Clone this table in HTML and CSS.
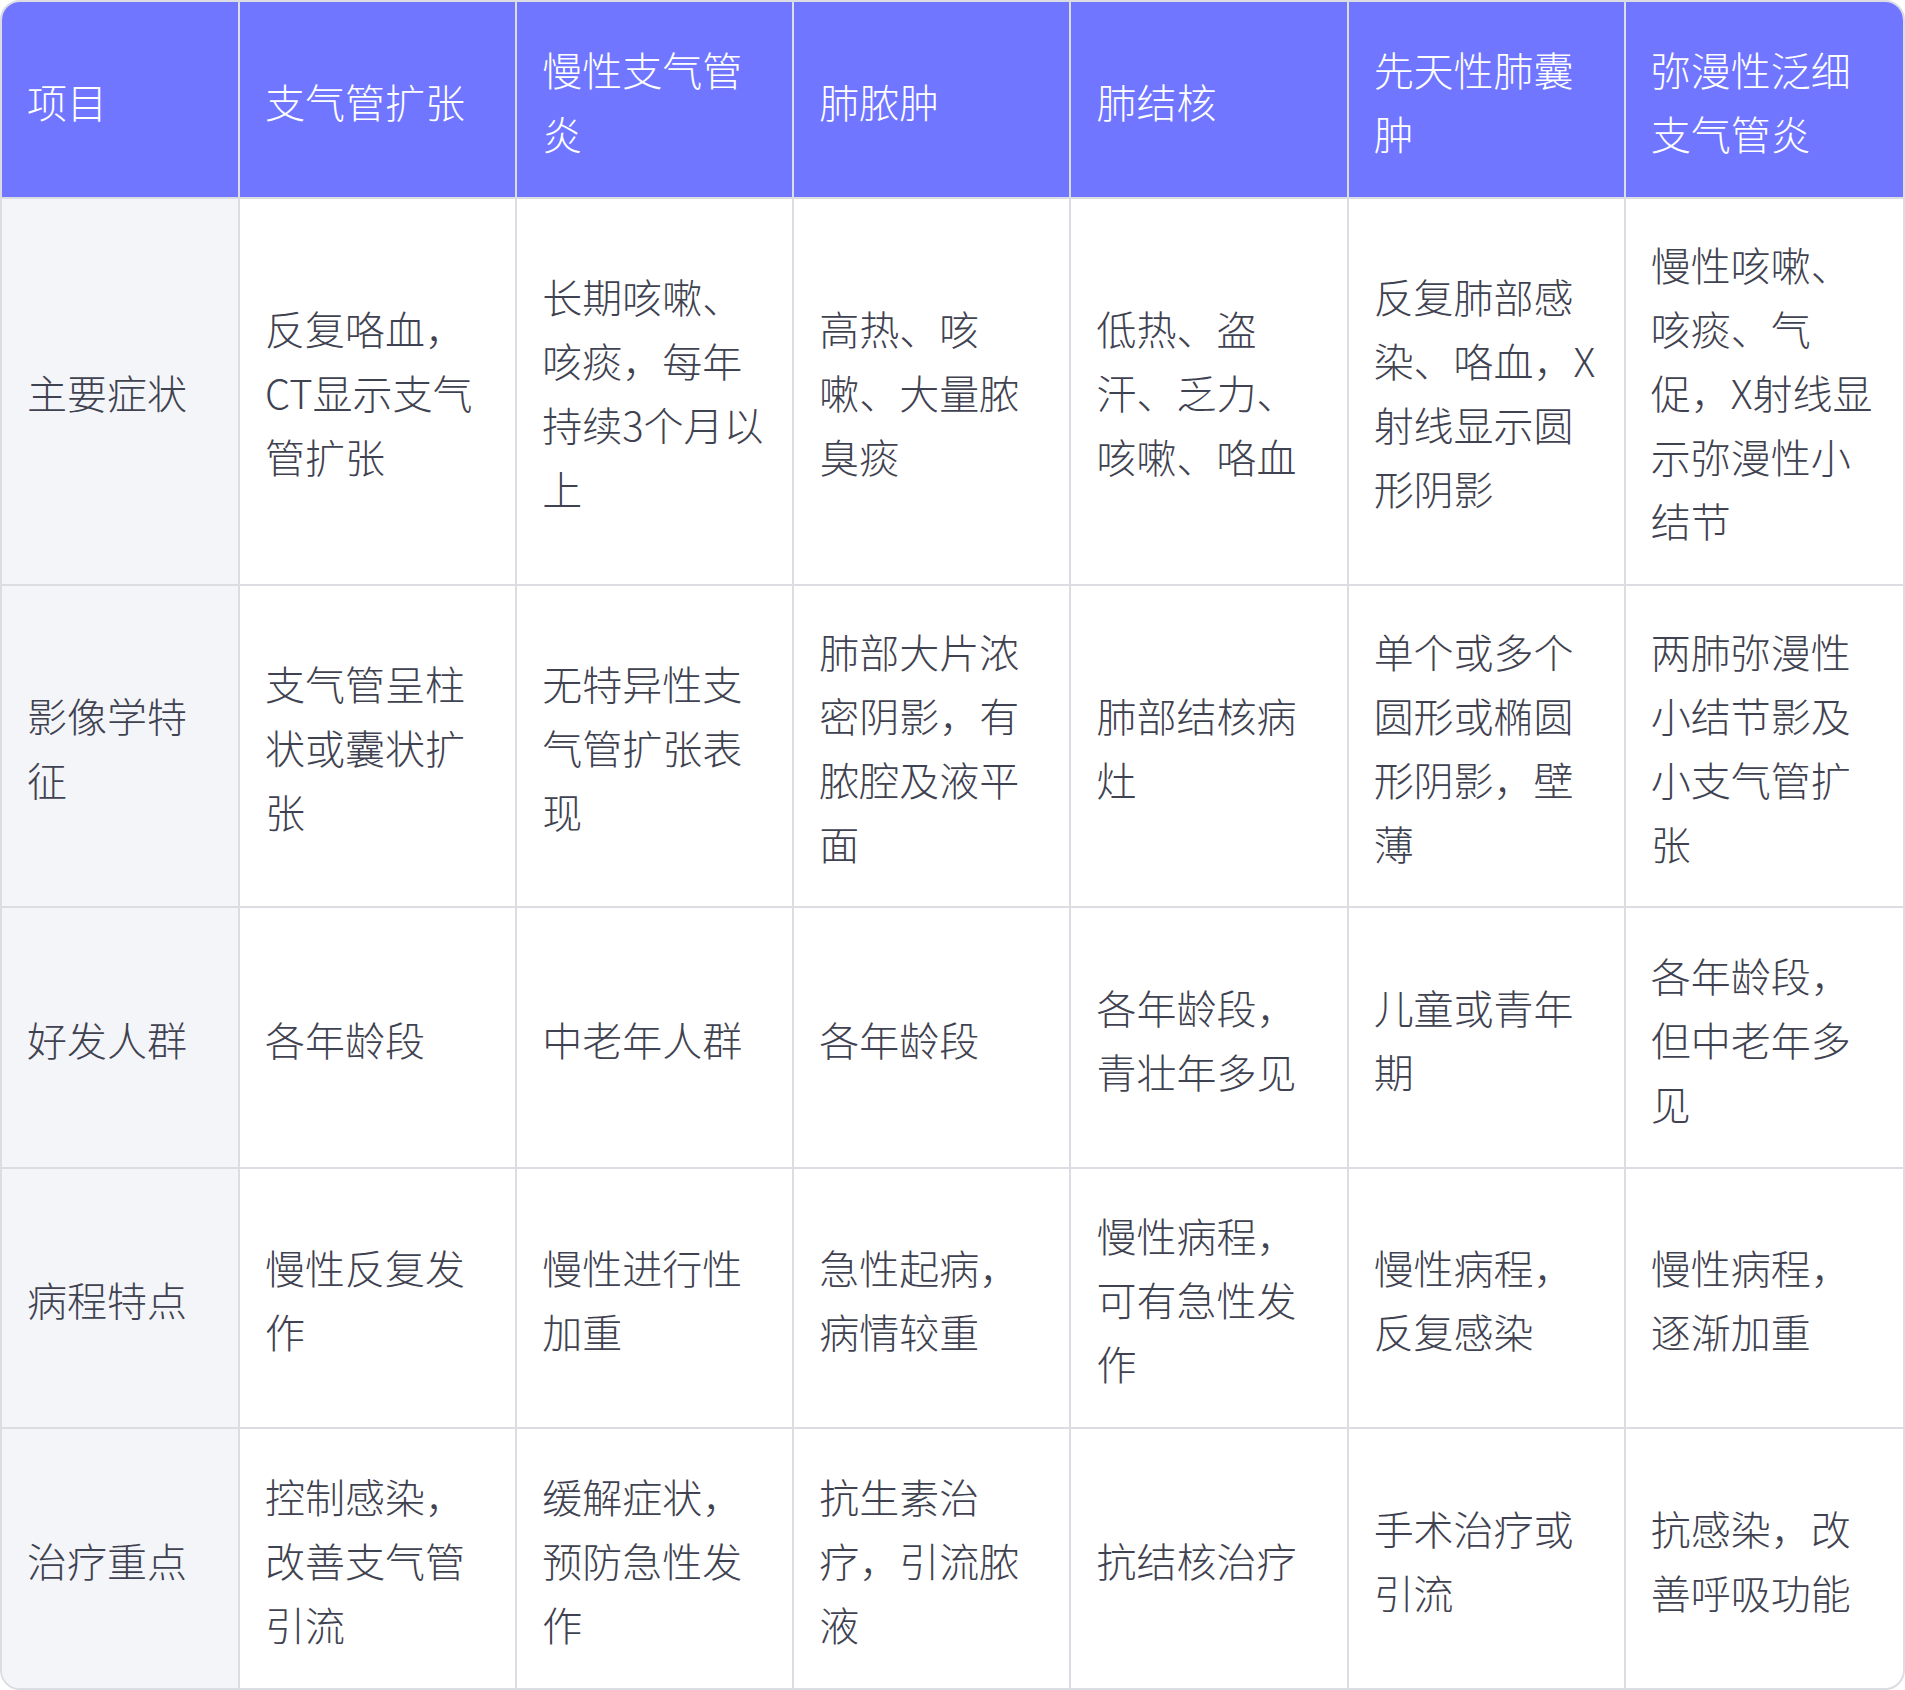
FILE: index.html
```html
<!DOCTYPE html>
<html lang="zh-CN">
<head>
<meta charset="utf-8">
<title>支气管扩张鉴别诊断</title>
<link rel="stylesheet" href="styles.css">
</head>
<body>
<div class="table-wrap">
<table class="cmp">
<colgroup>
<col class="col-first">
<col><col><col><col><col><col>
</colgroup>
<thead>
<tr>
<th>项目</th>
<th>支气管扩张</th>
<th>慢性支气管炎</th>
<th>肺脓肿</th>
<th>肺结核</th>
<th>先天性肺囊肿</th>
<th>弥漫性泛细支气管炎</th>
</tr>
</thead>
<tbody>
<tr>
<td>主要症状</td>
<td>反复咯血，CT显示支气管扩张</td>
<td>长期咳嗽、咳痰，每年持续3个月以上</td>
<td>高热、咳嗽、大量脓臭痰</td>
<td>低热、盗汗、乏力、咳嗽、咯血</td>
<td>反复肺部感染、咯血，X射线显示圆形阴影</td>
<td>慢性咳嗽、咳痰、气促，X射线显示弥漫性小结节</td>
</tr>
<tr>
<td>影像学特征</td>
<td>支气管呈柱状或囊状扩张</td>
<td>无特异性支气管扩张表现</td>
<td>肺部大片浓密阴影，有脓腔及液平面</td>
<td>肺部结核病灶</td>
<td>单个或多个圆形或椭圆形阴影，壁薄</td>
<td>两肺弥漫性小结节影及小支气管扩张</td>
</tr>
<tr>
<td>好发人群</td>
<td>各年龄段</td>
<td>中老年人群</td>
<td>各年龄段</td>
<td>各年龄段，青壮年多见</td>
<td>儿童或青年期</td>
<td>各年龄段，但中老年多见</td>
</tr>
<tr>
<td>病程特点</td>
<td>慢性反复发作</td>
<td>慢性进行性加重</td>
<td>急性起病，病情较重</td>
<td>慢性病程，可有急性发作</td>
<td>慢性病程，反复感染</td>
<td>慢性病程，逐渐加重</td>
</tr>
<tr>
<td>治疗重点</td>
<td>控制感染，改善支气管引流</td>
<td>缓解症状，预防急性发作</td>
<td>抗生素治疗，引流脓液</td>
<td>抗结核治疗</td>
<td>手术治疗或引流</td>
<td>抗感染，改善呼吸功能</td>
</tr>
</tbody>
</table>
</div>
</body>
</html>
```
FILE: styles.css
```css
html, body {
  margin: 0;
  padding: 0;
  background: #ffffff;
}
body {
  font-family: "Noto Sans CJK SC", "Noto Sans", sans-serif;
  font-weight: 300;
}
.table-wrap {
  width: 1905px;
  height: 1690px;
  box-sizing: border-box;
  border: 2px solid #dcdde3;
  border-radius: 20px;
  overflow: hidden;
}
.cmp {
  width: 100%;
  height: 100%;
  table-layout: fixed;
  border-collapse: separate;
  border-spacing: 0;
  font-size: 40px;
  line-height: 64px;
  color: #3f4250;
}
.col-first {
  width: 238px;
}
.cmp th,
.cmp td {
  text-align: left;
  vertical-align: middle;
  padding: 33px 25px 31px 25px;
  border-right: 2px solid #dcdde3;
  border-bottom: 2px solid #dcdde3;
  word-break: normal;
}
.cmp th:last-child,
.cmp td:last-child {
  border-right: none;
}
.cmp tbody tr:last-child td {
  border-bottom: none;
}
.cmp th {
  background: #7076ff;
  color: #ffffff;
  font-weight: 300;
  height: 131px;
}
.cmp td:first-child {
  background: #f4f5f9;
}
.cmp tbody tr:nth-child(1) td { height: 320px; }
.cmp tbody tr:nth-child(2) td { height: 256px; }
.cmp tbody tr:nth-child(3) td { height: 194px; }
.cmp tbody tr:nth-child(4) td { height: 194px; }
.cmp tbody tr:nth-child(5) td { height: 194px; }
```
